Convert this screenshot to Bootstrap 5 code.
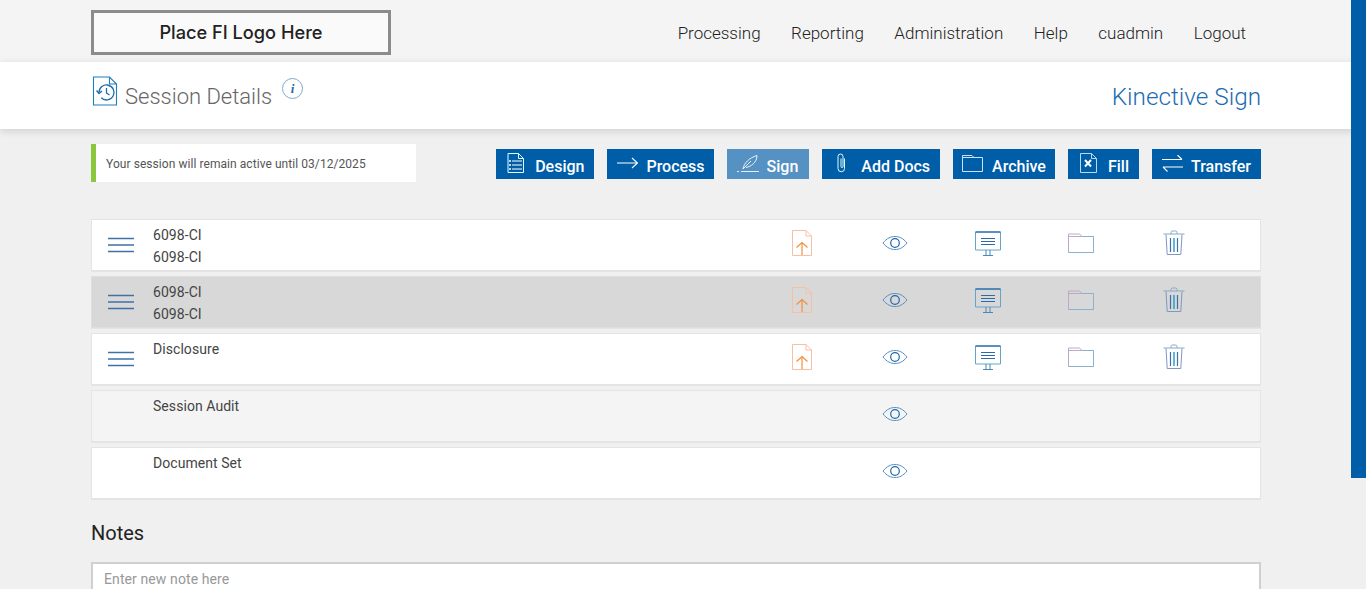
<!DOCTYPE html>
<html lang="en">
<head>
<meta charset="utf-8">
<title>Session Details</title>
<link href="https://cdn.jsdelivr.net/npm/bootstrap@5.3.0/dist/css/bootstrap.min.css" rel="stylesheet">
<style>
html,body{height:589px;overflow:hidden}
body{background:#f0f0f0;font-family:Roboto,"Liberation Sans",sans-serif;color:#333}
.wrap{width:1170px;margin-left:91px}
.topbar{height:62px;background:#f4f4f4}
.logo-box{width:300px;height:45px;margin-top:10px;border:3px solid #8c8c8c;background:#fafafa;font-family:Inter,sans-serif;font-weight:500;font-size:18.200px;color:#222}
.menu{padding-right:15px;gap:30.500px;margin-top:6px}
.menu a{font-size:17px;font-weight:300;color:#222;text-decoration:none}
.band{height:67px;background:#fff;box-shadow:0 2px 8px rgba(0,0,0,.14);position:relative}
.page-title{font-size:22px;font-weight:300;color:#666;margin:0;line-height:27px;padding-top:21px}
.title-ico{margin:14px 7px 0 1px}
.info-ico{margin:16px 0 0 10px}
.brand-name{font-size:24.300px;font-weight:300;color:#1c6cb0;padding-top:17px}
.actions{margin-top:15px;height:38px}
.notice{width:325px;height:38px;background:#fff;border-left:5px solid #8cc63f;padding:2px 0 0 10px;font-size:12px;letter-spacing:.06px;color:#555}
.tools{gap:13px;padding-top:5px}
.act{height:30px;background:#005ea8;color:#fff;font-size:16px;font-weight:500;border:0;border-radius:0;padding:0 10px 0 0;display:flex;align-items:center;line-height:1}
.act .lbl{position:relative;top:3px}
.act.dim{background:#5592c3;padding-right:11px}
.act.tight{padding-right:9px}
.ic-d{flex:none;position:relative;top:-1px;width:39px;padding-left:10px}
.ic-d svg{display:block}
.ic-design{padding-left:11px}
.ic-sign{width:40px}
.ic-add{padding-left:15px}
.ic-arch{padding-left:9px}
.ic-fill{width:40px;padding-left:12px}
.docs{margin-top:37px}
.doc{height:52px;margin-bottom:5px;background:#fff;border:1px solid #e4e4e4;box-shadow:0 1px 0 #e4e4e4;font-size:14px;letter-spacing:.06px;line-height:22px;color:#444}
.doc.sel{background:#d8d8d8;border-color:#dedede}
.doc.alt{background:#f4f4f4}
.grip{width:61px;flex:none;padding:13px 0 0 16px}
.names{width:602px;flex:none;padding-top:4px}
.cell{width:93px;flex:none;text-align:center;padding-top:9px}
.cell svg{display:block;margin:0 auto}
.cell svg.eye-i{margin-top:6px}
.cell svg.mon-i{margin-top:2px}
.cell svg.fold-i{margin-top:4px}
.cell svg.trash-i{margin-top:1px}
.notes-h{font-size:20px;font-weight:400;color:#222;margin:22px 0 0;line-height:24px}
.note-in{margin-top:17px;height:40px;background:#fff;border:2px solid #d0d0d0;border-bottom:0;padding:4px 11px;font-size:14px;letter-spacing:.1px;color:#999;line-height:22px}
.edge{position:absolute;right:0;top:0;width:15px;height:478px;background:#005ea8}
</style>
</head>
<body>
<svg width="0" height="0" class="d-block position-absolute">
<defs>
<symbol id="up" viewBox="0 0 22 28"><path d="M1.500 1.500H15l5.500 5.500V26.500H1.500Z M15 1.500V7h5.500" fill="none" stroke="#f9bfa4"/><path d="M11 26V13.500 M5.500 18.500 11 13.500l5.500 5" fill="none" stroke="#f58f3c" stroke-width="1.200"/></symbol>
<symbol id="eye" viewBox="0 0 26 16"><path d="M1 8C5 3 9 1.500 13 1.500S21 3 25 8c-4 5-8 6.500-12 6.500S5 13 1 8Z" fill="none" stroke="#5e8fbd"/><circle cx="13" cy="8" r="4.300" fill="none" stroke="#1d68ad" stroke-width="1.200"/></symbol>
<symbol id="mon" viewBox="0 0 26 26"><path d="M.5 1H25.500V19H.5Z" fill="none" stroke="#62a6c9"/><path d="M.5 1H25.500" stroke="#2a6cab" fill="none" stroke-width="1.300"/><path d="M6 7.500H20M6 10.500H20M6 13.500H20" stroke="#2a6cab" fill="none" stroke-width="1.100"/><path d="M11 19v5M15 19v5M8 24.500H18" stroke="#4b86b8" fill="none"/></symbol>
<symbol id="fold" viewBox="0 0 26 20"><path d="M.5 19.500V1H11.500L14 3.500H25.500V19.500Z M.5 3.500H14" fill="none" stroke="#bda9c4"/><path d="M14 3.500H25.500V19.500H.5" fill="none" stroke="#8fb0cb"/></symbol>
<symbol id="trash" viewBox="0 0 22 26"><path d="M.5 4H21.500M8 4V2.500Q8 1 9.500 1H12.500Q14 1 14 2.500V4" fill="none" stroke="#86a9c6"/><path d="M3 4.500 4.200 24.500H17.800L19 4.500" fill="none" stroke="#7f98c0"/><path d="M7.500 8V22M14.500 8V22" stroke="#3f6ea8" fill="none" stroke-width="1.200"/><path d="M11 8V22" stroke="#1d9ac9" fill="none" stroke-width="1.400"/></symbol>
<symbol id="menu3" viewBox="0 0 26 16"><path d="M0 1.500H26M0 8H26M0 14.500H26" stroke="#3f70a8" stroke-width="1.300" fill="none"/></symbol>
</defs>
</svg>

<div class="topbar">
  <div class="wrap d-flex justify-content-between align-items-center h-100">
    <div class="logo-box d-flex align-items-center justify-content-center align-self-start">Place FI Logo Here</div>
    <nav class="menu d-flex">
      <a href="#">Processing</a><a href="#">Reporting</a><a href="#">Administration</a><a href="#">Help</a><a href="#">cuadmin</a><a href="#">Logout</a>
    </nav>
  </div>
</div>

<div class="band">
  <div class="wrap d-flex justify-content-between">
    <div class="d-flex align-items-start">
      <svg class="title-ico" width="26" height="30" viewBox="0 0 26 30"><path d="M1.500 1H17.500L24.500 8V29H1.500Z M17.500 1V8H24.500" fill="none" stroke="#1d7fc0" stroke-width="1.100"/><path d="M7 16.500a7.500 7.500 0 1 1 2.200 5.300" fill="#fff" stroke="#1d6cab" stroke-width="1.300"/><path d="M4.500 14.500l2.500 3 3-2.500M14.500 12v5l3 2" fill="none" stroke="#1d6cab" stroke-width="1.300"/></svg>
      <h1 class="page-title">Session Details</h1>
      <svg class="info-ico" width="21" height="21" viewBox="0 0 21 21"><circle cx="10.500" cy="10.500" r="10" fill="#fff" stroke="#7fa8cc"/><text x="10.500" y="15" text-anchor="middle" font-family="Liberation Serif,serif" font-style="italic" font-weight="700" font-size="13" fill="#1d6cab">i</text></svg>
    </div>
    <div class="brand-name">Kinective Sign</div>
  </div>
</div>

<div class="wrap">
  <div class="actions d-flex justify-content-between">
    <div class="notice d-flex align-items-center">Your session will remain active until 03/12/2025</div>
    <div class="tools d-flex">
      <button class="act"><span class="ic-d ic-design"><svg width="17" height="20" viewBox="0 0 17 20"><path d="M1 .5H11.500L16.500 5.500V19.500H1Z M11.500 .5V5.500H16.500" fill="none" stroke="#dff"/><path d="M5 8H15M5 12H15M5 16H15" stroke="#fff" fill="none"/><path d="M2 8H4M2 12H4M2 16H4" stroke="#fff" stroke-width="1.600" fill="none"/></svg></span><span class="lbl">Design</span></button>
      <button class="act tight"><span class="ic-d"><svg width="21" height="12" viewBox="0 0 21 12"><path d="M0 6H20M15 1l5.500 5-5.500 5" fill="none" stroke="#fff" stroke-width="1.100"/></svg></span><span class="lbl">Process</span></button>
      <button class="act dim"><span class="ic-d ic-sign"><svg width="22" height="17" viewBox="0 0 22 17"><path d="M0 16.500H2M4 16.500H22" stroke="#e8f1f8" fill="none"/><path d="M6 14C7 8 12 3 20 .5c0 7-6 11-11 12M6 14 14 6" fill="none" stroke="#e8f1f8"/></svg></span><span class="lbl">Sign</span></button>
      <button class="act"><span class="ic-d ic-add"><svg width="9" height="20" viewBox="0 0 9 20"><path d="M7.500 5.500V15.500a3.200 3.200 0 0 1-6.500 0V3.500a2.500 2.500 0 0 1 5 0V13.500a1 1 0 0 1-2 0V5.500" fill="none" stroke="#dff"/></svg></span><span class="lbl">Add Docs</span></button>
      <button class="act tight"><span class="ic-d ic-arch"><svg width="21" height="17" viewBox="0 0 21 17"><path d="M.5 16.500V.5H10L12 2.500H20.500V16.500Z M.5 2.500H12" fill="none" stroke="#cfe2f7"/></svg></span><span class="lbl">Archive</span></button>
      <button class="act"><span class="ic-d ic-fill"><svg width="17" height="20" viewBox="0 0 17 20"><path d="M.5 .5H11.500L16.500 5.500V19.500H.5Z M11.500 .5V5.500H16.500" fill="none" stroke="#bcd9ee"/><path d="M5 7l6 6.500M11 7l-6 6.500" stroke="#fff" stroke-width="2" fill="none"/></svg></span><span class="lbl">Fill</span></button>
      <button class="act"><span class="ic-d"><svg width="21" height="17" viewBox="0 0 21 17"><path d="M0 4.500H20M15.500 0 20 4.500M21 12H1M5.500 16.500 1 12" fill="none" stroke="#fff" stroke-width="1.100"/></svg></span><span class="lbl">Transfer</span></button>
    </div>
  </div>

  <div class="docs">
    <div class="doc d-flex">
      <div class="grip"><svg width="26" height="16"><use href="#menu3"/></svg></div>
      <div class="names">6098-CI<br>6098-CI</div>
      <div class="cell"><svg width="22" height="28"><use href="#up"/></svg></div>
      <div class="cell"><svg class="eye-i" width="26" height="16"><use href="#eye"/></svg></div>
      <div class="cell"><svg class="mon-i" width="26" height="26"><use href="#mon"/></svg></div>
      <div class="cell"><svg class="fold-i" width="26" height="20"><use href="#fold"/></svg></div>
      <div class="cell"><svg class="trash-i" width="22" height="26"><use href="#trash"/></svg></div>
    </div>
    <div class="doc sel d-flex">
      <div class="grip"><svg width="26" height="16"><use href="#menu3"/></svg></div>
      <div class="names">6098-CI<br>6098-CI</div>
      <div class="cell"><svg width="22" height="28"><use href="#up"/></svg></div>
      <div class="cell"><svg class="eye-i" width="26" height="16"><use href="#eye"/></svg></div>
      <div class="cell"><svg class="mon-i" width="26" height="26"><use href="#mon"/></svg></div>
      <div class="cell"><svg class="fold-i" width="26" height="20"><use href="#fold"/></svg></div>
      <div class="cell"><svg class="trash-i" width="22" height="26"><use href="#trash"/></svg></div>
    </div>
    <div class="doc d-flex">
      <div class="grip"><svg width="26" height="16"><use href="#menu3"/></svg></div>
      <div class="names">Disclosure</div>
      <div class="cell"><svg width="22" height="28"><use href="#up"/></svg></div>
      <div class="cell"><svg class="eye-i" width="26" height="16"><use href="#eye"/></svg></div>
      <div class="cell"><svg class="mon-i" width="26" height="26"><use href="#mon"/></svg></div>
      <div class="cell"><svg class="fold-i" width="26" height="20"><use href="#fold"/></svg></div>
      <div class="cell"><svg class="trash-i" width="22" height="26"><use href="#trash"/></svg></div>
    </div>
    <div class="doc alt d-flex">
      <div class="grip"></div>
      <div class="names">Session Audit</div>
      <div class="cell"></div>
      <div class="cell"><svg class="eye-i" width="26" height="16"><use href="#eye"/></svg></div>
    </div>
    <div class="doc d-flex">
      <div class="grip"></div>
      <div class="names">Document Set</div>
      <div class="cell"></div>
      <div class="cell"><svg class="eye-i" width="26" height="16"><use href="#eye"/></svg></div>
    </div>
  </div>

  <h2 class="notes-h">Notes</h2>
  <div class="note-in">Enter new note here</div>
</div>
<div class="edge"></div>
</body>
</html>
